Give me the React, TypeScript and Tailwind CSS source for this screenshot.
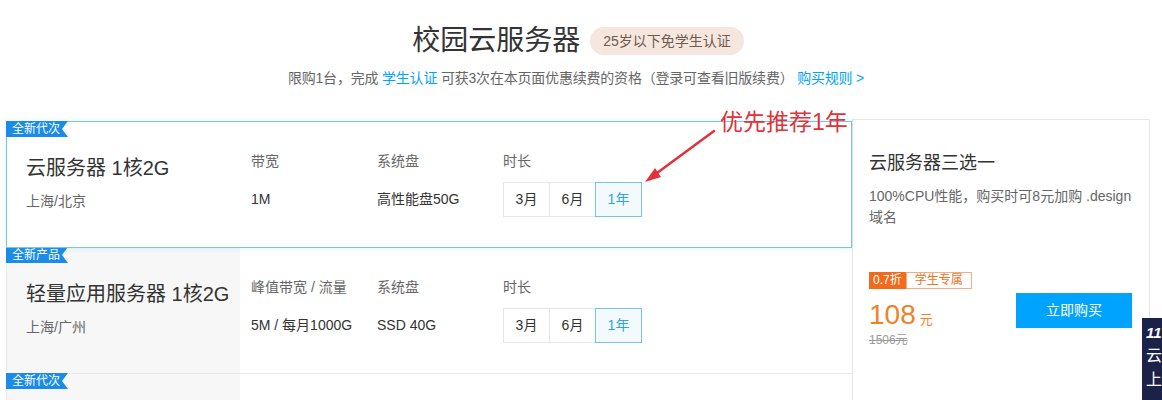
import React from 'react';

type Plan = {
  badge: string;
  title?: string;
  region?: string;
  bwLabel?: string;
  bw?: string;
  disk?: string;
  selected?: boolean;
};

const plans: Plan[] = [
  { badge: '全新代次', title: '云服务器 1核2G', region: '上海/北京', bwLabel: '带宽', bw: '1M', disk: '高性能盘50G', selected: true },
  { badge: '全新产品', title: '轻量应用服务器 1核2G', region: '上海/广州', bwLabel: '峰值带宽 / 流量', bw: '5M / 每月1000G', disk: 'SSD 40G' },
  // third row is only peeking in at the bottom edge
  { badge: '全新代次' },
];

const durations = ['3月', '6月', '1年'];

function Badge({ text }: { text: string }) {
  return (
    <div className="absolute -left-px -top-px h-[16px] w-[62px] bg-[#1a8ce8] pl-[6px] text-[12px] leading-[16px] text-white [clip-path:polygon(0_0,62px_0,56px_50%,62px_100%,0_100%)]">
      {text}
    </div>
  );
}

function PlanRow({ plan, first }: { plan: Plan; first: boolean }) {
  const frame = plan.selected
    ? 'z-10 border border-[#7cc4e3] bg-white shadow-[0_0_6px_rgba(60,170,230,0.18)]'
    : 'border border-r-0 border-[#e8e8e8] bg-white';
  return (
    <div className={`relative flex h-[127px] ${first ? '' : '-mt-px'} ${frame}`}>
      <Badge text={plan.badge} />
      <div className={`flex w-[233px] flex-col pl-[19px] pt-[32px] ${plan.selected ? '' : 'bg-[#f7f7f7]'}`}>
        {plan.title && <div className="text-[20px] leading-[28px] text-[#333]">{plan.title}</div>}
        {plan.region && <div className="mt-[9px] text-[14px] leading-[20px] text-[#666]">{plan.region}</div>}
      </div>
      {plan.title && (
        <div className="flex pl-[11px] pt-[29px]">
          <div className="w-[126px]">
            <div className="text-[14px] leading-[20px] text-[#666]">{plan.bwLabel}</div>
            <div className="mt-[11px] flex h-[35px] items-center text-[14px] text-[#333]">{plan.bw}</div>
          </div>
          <div className="w-[126px]">
            <div className="text-[14px] leading-[20px] text-[#666]">系统盘</div>
            <div className="mt-[11px] flex h-[35px] items-center text-[14px] text-[#333]">{plan.disk}</div>
          </div>
          <div>
            <div className="text-[14px] leading-[20px] text-[#666]">时长</div>
            <div className="mt-[11px] flex">
              {durations.map((d, i) => {
                const on = d === '1年';
                return (
                  <div
                    key={d}
                    className={`flex h-[35px] w-[47px] items-center justify-center border text-[14px] ${i > 0 ? '-ml-px' : ''} ${
                      on ? 'relative border-[#79c3e2] bg-[#f2fafd] text-[#2fa4df]' : 'border-[#e6e6e6] bg-white text-[#333]'
                    }`}
                  >
                    {d}
                  </div>
                );
              })}
            </div>
          </div>
        </div>
      )}
    </div>
  );
}

export default function App() {
  return (
    <div className="relative h-[400px] w-[1162px] overflow-hidden bg-white font-['Liberation_Sans','Noto_Sans_CJK_SC',sans-serif]">
      {/* header */}
      <div className="pt-[23px]">
        <div className="flex h-[36px] items-center justify-center gap-[10px] pr-[6px]">
          <h1 className="text-[28px] leading-[36px] text-[#333]">校园云服务器</h1>
          <span className="rounded-full bg-[#f6e6de] px-[13px] text-[14px] leading-[28px] text-[#6e5a51]">25岁以下免学生认证</span>
        </div>
        <p className="mt-[9px] pr-[10px] text-center text-[14px] leading-[20px] tracking-[-0.2px] text-[#666]">
          限购1台，完成 <span className="text-[#00a4ff]">学生认证</span> 可获3次在本页面优惠续费的资格（登录可查看旧版续费）{' '}
          <span className="text-[#00a4ff]">购买规则 &gt;</span>
        </p>
      </div>

      {/* main */}
      <div className="ml-[6px] mt-[31px] flex w-[1144px]">
        <div className="mt-[2px] w-[846px]">
          {plans.map((p, i) => (
            <PlanRow key={i} plan={p} first={i === 0} />
          ))}
        </div>

        <div className="h-[420px] w-[298px] border border-b-0 border-[#e6e6e6] pl-[16px] pr-[17px] pt-[30px]">
          <div className="text-[18px] leading-[26px] text-[#333]">云服务器三选一</div>
          <p className="mt-[10px] text-[14px] leading-[21px] text-[#666]">100%CPU性能，购买时可8元加购 .design 域名</p>
          <div className="mt-[44px] flex items-start justify-between">
            <div>
              <div className="flex h-[17px] text-[12px] leading-[15px]">
                <span className="border border-[#f26a1b] bg-[#f26a1b] px-[3px] text-white">0.7折</span>
                <span className="border border-[#efae84] px-[8px] text-[#e8752a]">学生专属</span>
              </div>
              <div className="mt-[10px] flex items-baseline text-[#f0812b]">
                <span className="text-[28px] leading-[32px]">108</span>
                <span className="ml-[4px] text-[13px]">元</span>
              </div>
              <div className="mt-px text-[12px] leading-[16px] text-[#999] line-through">1506元</div>
            </div>
            <button className="mt-[21px] h-[35px] w-[116px] bg-[#00a4ff] text-[14px] text-white">立即购买</button>
          </div>
        </div>
      </div>

      {/* annotation */}
      <div className="absolute left-[720px] top-[108px] z-20 text-[23px] leading-[28px] text-[#e1323a]">优先推荐1年</div>
      <svg className="absolute left-0 top-0 z-20" width="1162" height="400" viewBox="0 0 1162 400" fill="none">
        <line x1="714" y1="131" x2="657" y2="173" stroke="#e1323a" strokeWidth="2.5" strokeLinecap="round" />
        <polygon points="645,182 661,177 655,168" fill="#e1323a" />
      </svg>

      {/* floating promo banner */}
      <div className="absolute left-[1142px] top-[318px] z-20 h-[100px] w-[40px] bg-[#1c2148] pl-[4px] pt-[6px] text-white">
        <div className="text-[15px] font-bold italic leading-[18px]">11.</div>
        <div className="mt-[4px] text-[16px] leading-[20px]">云</div>
        <div className="mt-[4px] text-[16px] leading-[20px]">上</div>
      </div>
    </div>
  );
}
